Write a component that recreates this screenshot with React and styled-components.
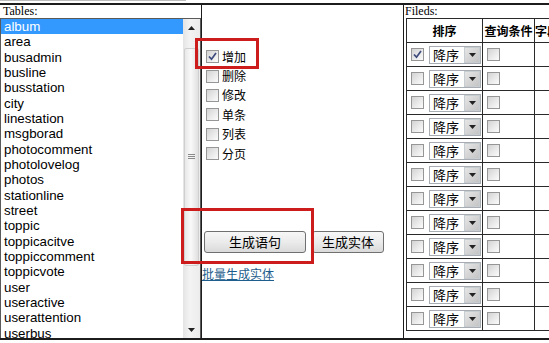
import React from "react";
import styled, { createGlobalStyle } from "styled-components";

const GlobalStyle = createGlobalStyle`
  html, body {
    margin: 0;
    padding: 0;
    background: #fff;
    overflow: hidden;
  }
`;

const tables = [
  "album", "area", "busadmin", "busline", "busstation", "city", "linestation",
  "msgborad", "photocomment", "photolovelog", "photos", "stationline", "street",
  "toppic", "toppicacitve", "toppiccomment", "toppicvote", "user", "useractive",
  "userattention", "userbus",
];

const actions = [
  { label: "增加", checked: true },
  { label: "删除" },
  { label: "修改" },
  { label: "单条" },
  { label: "列表" },
  { label: "分页" },
];

const fieldRows = Array.from({ length: 12 }, (_, i) => ({ id: i, checked: i === 0 }));

const cjk = `"Noto Sans CJK SC", "Noto Sans", sans-serif`;

const Page = styled.div`
  position: relative;
  width: 549px;
  height: 343px;
  overflow: hidden;
`;

const TopStub = styled.div`
  width: 186px;
  height: 0;
  border-top: 1px solid #bdbdbd;
  margin-bottom: 2px;
`;

const Frame = styled.div`
  display: flex;
  width: 640px;
  height: 333px;
  border-top: 2px solid #1c1c1c;
  border-bottom: 2px solid #1c1c1c;
`;

const Column = styled.div`
  flex: none;
  width: ${(p) => p.$w}px;
  display: flex;
  flex-direction: column;
  border-right: ${(p) => (p.$last ? "none" : "1px solid #1c1c1c")};
  overflow: hidden;
`;

const Label = styled.div`
  height: 13px;
  padding-left: ${(p) => p.$pad || 3}px;
  font: 12px/13px "Liberation Serif", serif;
  color: #000;
`;

const ListBox = styled.div`
  flex: 1;
  display: flex;
  min-height: 0;
  border: 1px solid #5a5a5a;
  border-bottom: none;
  overflow: hidden;
`;

const Items = styled.div`
  flex: 1;
  overflow: hidden;
`;

const Item = styled.div`
  height: 15.33px;
  padding-left: 3px;
  font: 13.33px/15.33px "Liberation Sans", Arial, sans-serif;
  color: ${(p) => (p.$selected ? "#fff" : "#000")};
  background: ${(p) => (p.$selected ? "#3399ff" : "transparent")};
  white-space: nowrap;
`;

const ScrollBar = styled.div`
  flex: none;
  width: 17px;
  display: flex;
  flex-direction: column;
  align-items: center;
  background: linear-gradient(to right, #e4e4e4, #f3f3f3 40%, #ececec);
`;

const Arrow = styled.div`
  flex: none;
  height: 17px;
  width: 17px;
  display: flex;
  align-items: center;
  justify-content: center;
`;

const Thumb = styled.div`
  margin-top: 12px;
  width: 15px;
  height: 218px;
  box-sizing: border-box;
  border: 1px solid #cfcfcf;
  border-radius: 2px;
  background: linear-gradient(to right, #e8e8e8, #f9f9f9 45%, #e0e0e0);
  display: flex;
  align-items: center;
  justify-content: center;
`;

const Track = styled.div`
  flex: 1;
`;

const Middle = styled.div`
  padding-top: 42px;
  display: flex;
  flex-direction: column;
`;

const CheckRow = styled.label`
  height: 19.4px;
  display: flex;
  align-items: center;
  font: 12px/14px ${cjk};
  color: #000;
`;

const Box = styled.span`
  flex: none;
  width: 13px;
  height: 13px;
  box-sizing: border-box;
  margin: ${(p) => p.$m || "0"};
  border: 1px solid #969696;
  background: linear-gradient(135deg, #d3d3d3 0%, #ececec 60%, #fbfbfb 100%);
  display: inline-flex;
  align-items: center;
  justify-content: center;
`;

const ButtonRow = styled.div`
  margin-top: 68px;
  padding-left: 2px;
  display: flex;
  gap: 6px;
`;

const Button = styled.button`
  width: ${(p) => p.$w}px;
  height: 22px;
  padding: 0;
  box-sizing: border-box;
  border: 1px solid #707070;
  border-radius: 3px;
  background: linear-gradient(#f7f7f7, #ebebeb 50%, #dadada);
  font: 13px/18px ${cjk};
  color: #000;
`;

const BatchLink = styled.a`
  margin-top: 13px;
  align-self: flex-start;
  font: 12px/16px ${cjk};
  color: #1e5d8c;
  text-decoration: underline;
`;

const Grid = styled.table`
  margin-left: 2px;
  border-collapse: collapse;
  table-layout: fixed;
  width: 240px;
  border: 1px solid #2a2a2a;
`;

const HeadCell = styled.th`
  height: 23px;
  padding: 0;
  border: 1px solid #2a2a2a;
  font: bold 12px/14px ${cjk};
  color: #000;
  text-align: ${(p) => p.$align || "center"};
  white-space: nowrap;
  overflow: hidden;
`;

const Cell = styled.td`
  height: 23px;
  padding: 0;
  border: 1px solid #2a2a2a;
`;

const CellInner = styled.div`
  display: flex;
  align-items: center;
`;

const SelectBox = styled.div`
  flex: none;
  display: flex;
  width: 52px;
  height: 18px;
  box-sizing: border-box;
  margin-left: 5px;
  border: 1px solid #a7adb3;
  background: #fff;
`;

const SelectText = styled.span`
  flex: 1;
  padding-left: 3px;
  font: 13px/16px ${cjk};
  color: #000;
`;

const DropBtn = styled.span`
  flex: none;
  width: 16px;
  box-sizing: border-box;
  border: 1px solid #c8cdd2;
  background: linear-gradient(135deg, #e6e6e6, #c4c4c4);
  display: flex;
  align-items: center;
  justify-content: center;
`;

const RedBox = styled.div`
  position: absolute;
  left: ${(p) => p.$x}px;
  top: ${(p) => p.$y}px;
  width: ${(p) => p.$w}px;
  height: ${(p) => p.$h}px;
  box-sizing: border-box;
  border: 3px solid #cc1c1c;
  pointer-events: none;
`;

function Tri({ down }) {
  return (
    <svg width="7" height="4" viewBox="0 0 7 4">
      <path d={down ? "M0 0 H7 L3.5 4 Z" : "M0 4 H7 L3.5 0 Z"} fill="#222" />
    </svg>
  );
}

function Checkbox({ checked, m }) {
  return (
    <Box $m={m}>
      {checked && (
        <svg width="9" height="9" viewBox="0 0 9 9">
          <path d="M1 4.5 L3.5 7.2 L8 1" fill="none" stroke="#3c4a7c" strokeWidth="1.7" />
        </svg>
      )}
    </Box>
  );
}

function Select() {
  return (
    <SelectBox>
      <SelectText>降序</SelectText>
      <DropBtn>
        <Tri down />
      </DropBtn>
    </SelectBox>
  );
}

export default function App() {
  return (
    <Page>
      <GlobalStyle />
      <TopStub />
      <Frame>
        <Column $w={201}>
          <Label>Tables:</Label>
          <ListBox>
            <Items>
              {tables.map((t, i) => (
                <Item key={t} $selected={i === 0}>{t}</Item>
              ))}
            </Items>
            <ScrollBar>
              <Arrow><Tri /></Arrow>
              <Thumb>
                <svg width="7" height="6" viewBox="0 0 7 6">
                  <path d="M0 0.5 H7 M0 2.5 H7 M0 4.5 H7" stroke="#8a8a8a" strokeWidth="1" />
                </svg>
              </Thumb>
              <Track />
              <Arrow><Tri down /></Arrow>
            </ScrollBar>
          </ListBox>
        </Column>

        <Column $w={201}>
          <Middle>
            {actions.map((a) => (
              <CheckRow key={a.label}>
                <Checkbox checked={a.checked} m="0 3px 0 4px" />
                {a.label}
              </CheckRow>
            ))}
            <ButtonRow>
              <Button $w={102}>生成语句</Button>
              <Button $w={72}>生成实体</Button>
            </ButtonRow>
            <BatchLink href="#">批量生成实体</BatchLink>
          </Middle>
        </Column>

        <Column $w={236} $last>
          <Label $pad={1}>Fileds:</Label>
          <Grid>
            <colgroup>
              <col style={{ width: 76 }} />
              <col style={{ width: 52 }} />
              <col style={{ width: 112 }} />
            </colgroup>
            <thead>
              <tr>
                <HeadCell>排序</HeadCell>
                <HeadCell>查询条件</HeadCell>
                <HeadCell $align="left">字段名称</HeadCell>
              </tr>
            </thead>
            <tbody>
              {fieldRows.map((r) => (
                <tr key={r.id}>
                  <Cell>
                    <CellInner>
                      <Checkbox checked={r.checked} m="0 0 0 4px" />
                      <Select />
                    </CellInner>
                  </Cell>
                  <Cell>
                    <CellInner>
                      <Checkbox m="0 0 0 4px" />
                    </CellInner>
                  </Cell>
                  <Cell />
                </tr>
              ))}
            </tbody>
          </Grid>
        </Column>
      </Frame>
      <RedBox $x={195} $y={38} $w={64} $h={31} />
      <RedBox $x={181} $y={208} $w={133} $h={56} />
    </Page>
  );
}
